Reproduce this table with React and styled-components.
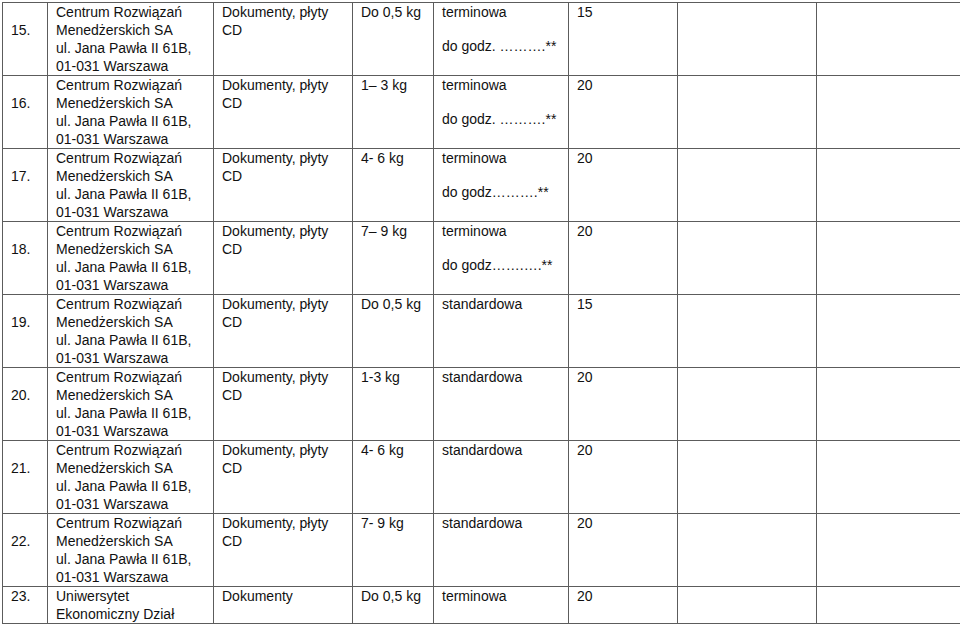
import React from 'react';
import styled, { createGlobalStyle } from 'styled-components';

const GlobalStyle = createGlobalStyle`
  html, body {
    margin: 0;
    padding: 0;
    background: #ffffff;
  }
  body {
    font-family: "Liberation Sans", Arial, sans-serif;
    color: #111;
  }
`;

const Page = styled.div`
  padding: 2px 0 0 2px;
  width: 960px;
  height: 624px;
  box-sizing: border-box;
  overflow: hidden;
`;

const Table = styled.table`
  border-collapse: collapse;
  table-layout: fixed;
  width: 958px;
  font-size: 14px;
  line-height: 18px;
`;

const Cell = styled.td`
  border: 1px solid #5c5c5c;
  padding: 0 8px;
  vertical-align: ${props => (props.$middle ? 'middle' : 'top')};
  padding-bottom: ${props => (props.$middle ? '18px' : '0')};
  white-space: nowrap;
  overflow: hidden;
`;

const Line = styled.div`
  height: 18px;
`;

const Note = styled.div`
  margin-top: 16px;
  height: 18px;
`;

const cols = [45, 166, 139, 81, 135, 109, 139, 144];

const address = [
  'Centrum Rozwiązań',
  'Menedżerskich SA',
  'ul. Jana Pawła II 61B,',
  '01-031 Warszawa',
];

const rows = [
  { no: '15.', weight: 'Do 0,5 kg', kind: 'terminowa', note: 'do godz. ……….**', price: '15' },
  { no: '16.', weight: '1– 3 kg', kind: 'terminowa', note: 'do godz. ……….**', price: '20' },
  { no: '17.', weight: '4- 6 kg', kind: 'terminowa', note: 'do godz……….**', price: '20' },
  { no: '18.', weight: '7– 9 kg', kind: 'terminowa', note: 'do godz…….….**', price: '20' },
  { no: '19.', weight: 'Do 0,5 kg', kind: 'standardowa', price: '15' },
  { no: '20.', weight: '1-3 kg', kind: 'standardowa', price: '20' },
  { no: '21.', weight: '4- 6 kg', kind: 'standardowa', price: '20' },
  { no: '22.', weight: '7- 9 kg', kind: 'standardowa', price: '20' },
];

export default function App() {
  return (
    <Page>
      <GlobalStyle />
      <Table>
        <colgroup>
          {cols.map((w, i) => (
            <col key={i} style={{ width: w }} />
          ))}
        </colgroup>
        <tbody>
          {rows.map(r => (
            <tr key={r.no}>
              <Cell $middle>{r.no}</Cell>
              <Cell>
                {address.map(l => (
                  <Line key={l}>{l}</Line>
                ))}
              </Cell>
              <Cell>
                <Line>Dokumenty, płyty</Line>
                <Line>CD</Line>
              </Cell>
              <Cell>{r.weight}</Cell>
              <Cell>
                <Line>{r.kind}</Line>
                {r.note && <Note>{r.note}</Note>}
              </Cell>
              <Cell>{r.price}</Cell>
              <Cell />
              <Cell />
            </tr>
          ))}
          <tr>
            <Cell $middle>23.</Cell>
            <Cell>
              <Line>Uniwersytet</Line>
              <Line>Ekonomiczny Dział</Line>
            </Cell>
            <Cell>Dokumenty</Cell>
            <Cell>Do 0,5 kg</Cell>
            <Cell>terminowa</Cell>
            <Cell>20</Cell>
            <Cell />
            <Cell />
          </tr>
        </tbody>
      </Table>
    </Page>
  );
}
